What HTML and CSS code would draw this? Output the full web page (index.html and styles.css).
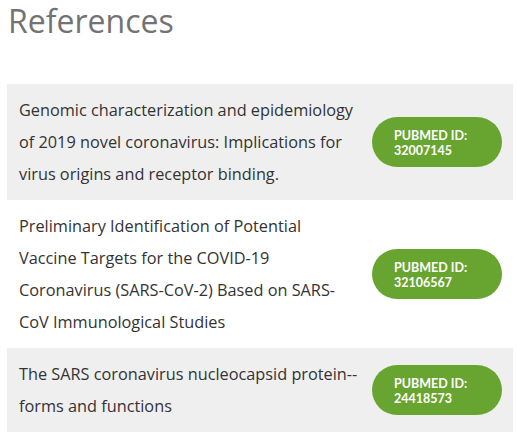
FILE: index.html
```html
<!DOCTYPE html>
<html lang="en">
<head>
<meta charset="utf-8">
<title>References</title>
<link rel="stylesheet" href="styles.css">
</head>
<body>
<main class="page">
  <h1 class="title">References</h1>
  <ul class="refs">
    <li class="ref ref-shaded">
      <p class="ref-text">Genomic characterization and epidemiology of 2019 novel coronavirus: Implications for virus origins and receptor binding.</p>
      <a class="pubmed" href="#"><span class="pubmed-label">PUBMED ID:</span><span class="pubmed-id">32007145</span></a>
    </li>
    <li class="ref">
      <p class="ref-text">Preliminary Identification of Potential Vaccine Targets for the COVID-19 Coronavirus (SARS-CoV-2) Based on SARS-CoV Immunological Studies</p>
      <a class="pubmed" href="#"><span class="pubmed-label">PUBMED ID:</span><span class="pubmed-id">32106567</span></a>
    </li>
    <li class="ref ref-shaded">
      <p class="ref-text">The SARS coronavirus nucleocapsid protein--forms and functions</p>
      <a class="pubmed" href="#"><span class="pubmed-label">PUBMED ID:</span><span class="pubmed-id">24418573</span></a>
    </li>
  </ul>
</main>
</body>
</html>
```

FILE: styles.css
```css
* { box-sizing: border-box; }
html, body { margin: 0; padding: 0; background: #ffffff; }
body {
  font-family: "Open Sans", "Noto Sans", sans-serif;
  color: #333333;
}
.page {
  width: 517px;
  padding: 0 4px 0 7px;
}
.title {
  margin: 0;
  padding: 0 0 0 1px;
  font-size: 32px;
  font-weight: 400;
  line-height: 41px;
  color: #737373;
  height: 84px;
}
.refs {
  list-style: none;
  margin: 0;
  padding: 0;
}
.ref {
  display: flex;
  align-items: center;
  justify-content: space-between;
  padding: 10px 11px 10px 12px;
  background: #ffffff;
}
.ref-shaded { background: #efefef; }
.ref-text {
  margin: 0;
  width: 340px;
  font-size: 16.3px;
  line-height: 32px;
  color: #333333;
}
.pubmed {
  flex: none;
  display: flex;
  flex-direction: column;
  justify-content: center;
  width: 130px;
  height: 50px;
  border-radius: 25px;
  background: #68a530;
  color: #ffffff;
  text-decoration: none;
  font-family: Lato, "Open Sans", sans-serif;
  font-size: 12.5px;
  font-weight: 700;
  line-height: 15px;
  padding: 1px 0 0 22px;
}
.pubmed-label, .pubmed-id { display: block; }
```
